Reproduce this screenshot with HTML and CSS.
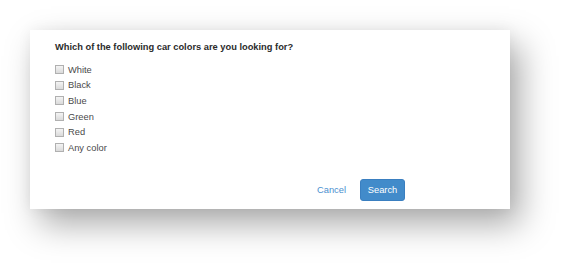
FILE: index.html
```html
<!DOCTYPE html>
<html lang="en">
  <head>
    <meta charset="UTF-8" />
    <title>Car colors</title>
    <link rel="stylesheet" href="styles.css">
  </head>
  <body class="body">
    <div class="dialog">
      <h2 class="dialog__title">Which of the following car colors are you looking for?</h2>
      <ul class="options">
        <li class="option"><span class="option__box"></span>White</li>
        <li class="option"><span class="option__box"></span>Black</li>
        <li class="option"><span class="option__box"></span>Blue</li>
        <li class="option"><span class="option__box"></span>Green</li>
        <li class="option"><span class="option__box"></span>Red</li>
        <li class="option"><span class="option__box"></span>Any color</li>
      </ul>
      <div class="actions">
        <button class="button button_link">Cancel</button>
        <button class="button button_primary">Search</button>
      </div>
    </div>
  </body>
</html>
```

FILE: styles.css
```css
.body {
  margin: 0;
  padding: 30px 0 0 30px;
  min-height: 265px;
  box-sizing: border-box;
  background-color: #fff;
  font-family: "Liberation Sans", Arial, sans-serif;
}
.dialog {
  box-sizing: border-box;
  width: 480px;
  height: 179px;
  padding: 11px 25px 0 25px;
  background-color: #fff;
  box-shadow: 10px 15px 32px rgba(0, 0, 0, 0.34), 0 0 14px rgba(0, 0, 0, 0.05);
  display: flex;
  flex-direction: column;
}
.dialog__title {
  margin: 0;
  font-size: 9.3px;
  line-height: 12px;
  font-weight: bold;
  color: #2b2b2b;
}
.options {
  list-style: none;
  margin: 9px 0 0 0;
  padding: 0;
}
.option {
  display: flex;
  align-items: center;
  height: 15.6px;
  font-size: 9.3px;
  color: #4a4a4a;
}
.option__box {
  box-sizing: border-box;
  width: 9px;
  height: 9px;
  margin-right: 4px;
  border: 1px solid #b0b0b0;
  background: linear-gradient(#f4f4f4, #dadada);
}
.actions {
  display: flex;
  justify-content: flex-end;
  align-items: center;
  gap: 14px;
  margin-top: 23px;
  padding-right: 80px;
}
.button {
  font-family: "Liberation Sans", Arial, sans-serif;
  font-size: 9.3px;
  border: none;
  background: none;
  padding: 0;
  cursor: pointer;
}
.button_link {
  color: #4a90d0;
}
.button_primary {
  width: 45px;
  height: 22px;
  border-radius: 3px;
  border: 1px solid #3a7fc0;
  background-color: #428bca;
  color: #fff;
}
```
